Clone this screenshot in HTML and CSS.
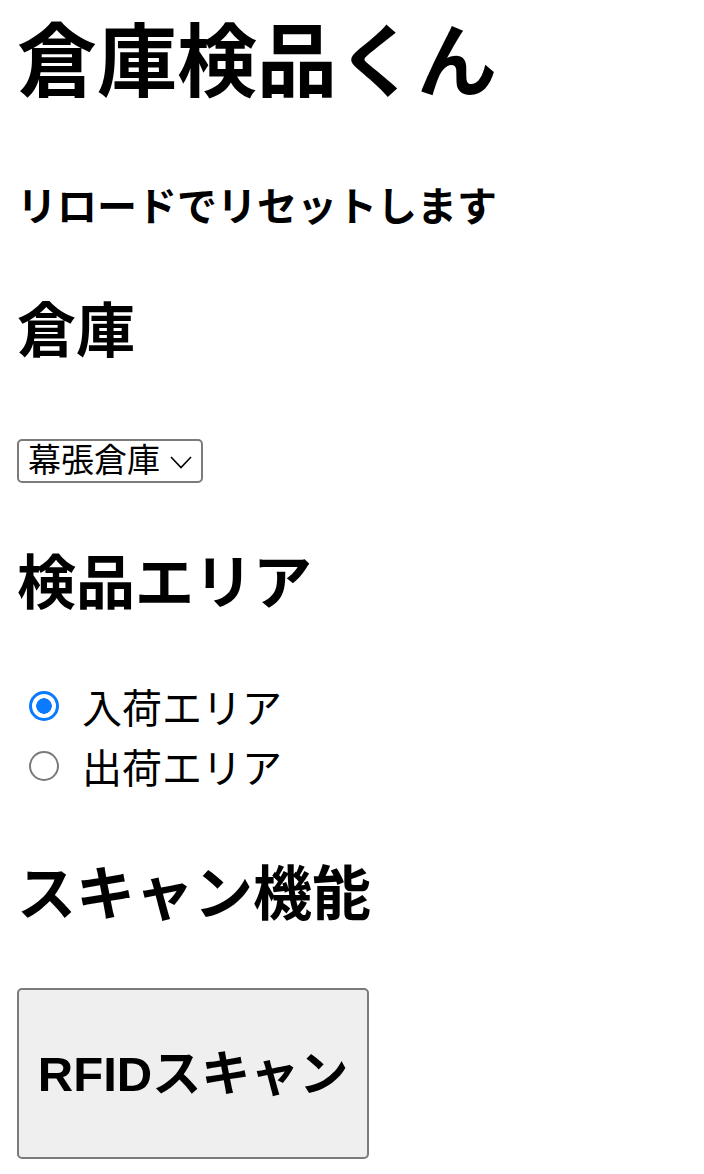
FILE: index.html
```html
<!DOCTYPE html>
<html lang="ja">
<head>
    <meta charset="UTF-8">
    <meta name="viewport" content="width=device-width, initial-scale=1.0">
    <title>倉庫検品くん</title>
    <link rel="stylesheet" href="styles.css">
</head>
<body>
    <h1>倉庫検品くん</h1>
    <h4 class="note">リロードでリセットします</h4>

    <h2>倉庫</h2>
    <div class="select-box">
        <select id="warehouse">
            <option>幕張倉庫</option>
            <option>川崎倉庫</option>
        </select>
        <svg class="chevron" width="22" height="13" viewBox="0 0 22 13">
            <path d="M1 1 L11 11.5 L21 1" fill="none" stroke="#000" stroke-width="1.6"/>
        </svg>
    </div>

    <h2>検品エリア</h2>
    <div class="radios">
        <label class="radio"><input type="radio" name="area" value="in" checked><span>入荷エリア</span></label>
        <label class="radio"><input type="radio" name="area" value="out"><span>出荷エリア</span></label>
    </div>

    <h2>スキャン機能</h2>
    <button class="scan-btn">RFIDスキャン</button>
</body>
</html>
```

FILE: styles.css
```css
body {
    font-family: "Liberation Sans", "Noto Sans CJK JP", sans-serif;
    margin: 0;
    padding: 0 17px;
    background: #fff;
    color: #000;
}

h1 {
    font-size: 80px;
    line-height: 80px;
    font-weight: bold;
    margin: 23px 0 0;
}

.note {
    font-size: 40px;
    line-height: 40px;
    font-weight: bold;
    margin: 84px 0 0;
}

h2 {
    font-size: 59px;
    line-height: 58px;
    font-weight: bold;
    margin: 76px 0 0;
}

.select-box {
    display: inline-flex;
    align-items: center;
    margin-top: 78px;
    height: 44px;
    width: 186px;
    box-sizing: border-box;
    border: 2px solid #7b7b7b;
    border-radius: 5px;
    padding: 0 7px 0 9px;
    gap: 10px;
}

.select-box select {
    -webkit-appearance: none;
    appearance: none;
    border: none;
    background: transparent;
    font-family: inherit;
    font-size: 33px;
    line-height: 40px;
    padding: 0;
    margin: 0;
    color: #000;
    outline: none;
}

.chevron {
    flex: none;
    margin-top: 2px;
}

.select-box + h2 {
    margin-top: 72px;
}

.radios {
    display: flex;
    flex-direction: column;
    margin-top: 63px;
}

.radio {
    display: flex;
    align-items: center;
    height: 60px;
    font-size: 40px;
    gap: 23px;
    padding-left: 12px;
}

.radio input {
    -webkit-appearance: none;
    appearance: none;
    width: 30px;
    height: 30px;
    margin: 0;
    border: 2px solid #7a7a7a;
    border-radius: 50%;
    box-sizing: border-box;
    background: #fff;
}

.radio input:checked {
    border: 3px solid #0a7aff;
    background: radial-gradient(circle, #0a7aff 0 7.5px, #fff 8px);
}

.radios + h2 {
    margin-top: 70px;
}

.scan-btn {
    display: block;
    margin-top: 64px;
    font-family: inherit;
    font-size: 49px;
    line-height: 50px;
    font-weight: bold;
    white-space: nowrap;
    color: #000;
    background: #efefef;
    border: 2px solid #7b7b7b;
    border-radius: 5px;
    padding: 0;
    width: 352px;
    height: 171px;
}
```
